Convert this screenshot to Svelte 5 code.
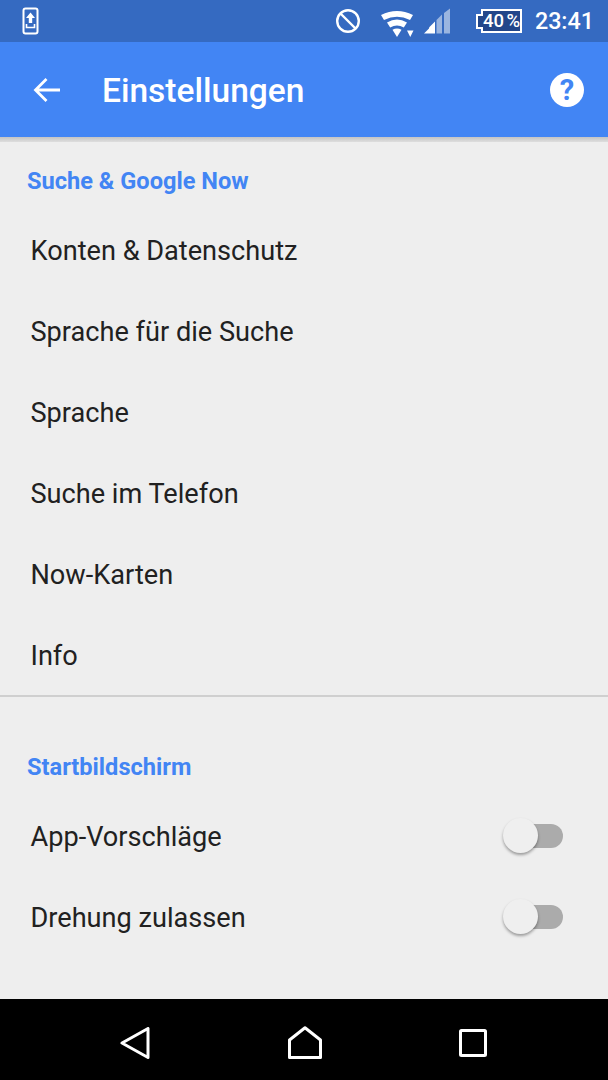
<script lang="ts">
  const searchItems = [
    "Konten & Datenschutz",
    "Sprache für die Suche",
    "Sprache",
    "Suche im Telefon",
    "Now-Karten",
    "Info",
  ];
  const homeItems = ["App-Vorschläge", "Drehung zulassen"];
</script>

<div class="phone">
  <div class="statusbar">
    <svg class="st-upload" width="18" height="28" viewBox="0 0 18 28">
      <rect x="1.5" y="1.5" width="14" height="25" rx="2" fill="none" stroke="#fff" stroke-width="2" />
      <path d="M8.5 5.5 L13 11 H10.2 V16 H6.8 V11 H4 Z" fill="#fff" />
      <path d="M4.5 17 V20.5 H12.5 V17" fill="none" stroke="#fff" stroke-width="1.6" />
    </svg>
    <div class="st-spacer"></div>
    <svg class="st-block" width="26" height="26" viewBox="0 0 26 26">
      <circle cx="13" cy="13" r="10.8" fill="none" stroke="#fff" stroke-width="2.4" />
      <path d="M5.5 5.5 L20.5 20.5" stroke="#fff" stroke-width="2.4" />
    </svg>
    <svg class="st-wifi" width="34" height="30" viewBox="0 0 34 30">
      <path d="M0 8 Q16 0 32 8 L29 13 Q16 6.500 3 13 Z" fill="#fff" />
      <path d="M6 15.500 Q16 9.500 26 15.500 L22.800 20.500 Q16 16.500 9.200 20.500 Z" fill="#fff" />
      <path d="M11.500 22.800 Q16 20 20.500 22.800 L16 30 Z" fill="#fff" />
      <path d="M26 23.500 H32.500 L29.250 30 Z" fill="#fff" />
    </svg>
    <svg class="st-signal" width="26" height="26" viewBox="0 0 26 26">
      <path d="M0 25.500 L5 20.500 V25.500 Z" fill="#fff" />
      <path d="M5 25.500 V19.500 L11 13.500 V25.500 Z" fill="#fff" />
      <path d="M12.500 25.500 V12 L18 6.500 V25.500 Z" fill="#fff" opacity="0.5" />
      <path d="M20 25.500 V5 L26 0.500 V25.500 Z" fill="#fff" opacity="0.5" />
    </svg>
    <div class="st-battery">
      <span class="bat-nub"></span>
      <span class="bat-body">40 %</span>
    </div>
    <span class="st-time">23:41</span>
  </div>

  <header class="appbar">
    <svg class="back" width="28" height="28" viewBox="0 0 28 28">
      <path d="M27 14 H3 M13.500 3 L2.500 14 L13.500 25" fill="none" stroke="#fff" stroke-width="2.800" />
    </svg>
    <h1>Einstellungen</h1>
    <div class="help">?</div>
  </header>
  <div class="appbar-shadow"></div>

  <main class="content">
    <section class="group first">
      <h2>Suche &amp; Google Now</h2>
      {#each searchItems as item}
        <div class="row">{item}</div>
      {/each}
    </section>
    <div class="divider"></div>
    <section class="group home">
      <h2>Startbildschirm</h2>
      {#each homeItems as item}
        <div class="row">
          <span>{item}</span>
          <span class="switch"><span class="thumb"></span></span>
        </div>
      {/each}
    </section>
  </main>

  <nav class="navbar">
    <svg width="30" height="32" viewBox="0 0 30 32">
      <path d="M2 16 L28 1.500 V30.500 Z" fill="none" stroke="#fff" stroke-width="3" stroke-linejoin="round" />
    </svg>
    <svg width="34" height="33" viewBox="0 0 34 33">
      <path d="M1.500 31.500 V14 L17 1.800 L32.500 14 V31.500 Z" fill="none" stroke="#fff" stroke-width="3" stroke-linejoin="round" />
    </svg>
    <svg width="28" height="28" viewBox="0 0 28 28">
      <rect x="1.500" y="1.500" width="25" height="25" rx="1" fill="none" stroke="#fff" stroke-width="3" />
    </svg>
  </nav>
</div>

<style>
  :global(body) {
    margin: 0;
    background: #eeeeee;
  }

  .phone {
    width: 608px;
    height: 1080px;
    display: flex;
    flex-direction: column;
    font-family: Roboto, "Liberation Sans", sans-serif;
    overflow: hidden;
  }

  .statusbar {
    height: 42px;
    background: #356ac1;
    display: flex;
    align-items: center;
    padding: 0 14px 0 22px;
    box-sizing: border-box;
    flex-shrink: 0;
  }

  .st-spacer {
    flex: 1;
  }

  .st-block {
    margin-right: 20px;
  }

  .st-wifi {
    margin-right: 9px;
    margin-top: 1px;
  }

  .st-signal {
    margin-right: 26px;
  }

  .st-battery {
    display: flex;
    align-items: center;
    margin-right: 13px;
  }

  .bat-nub {
    position: relative;
    z-index: 1;
    width: 7px;
    height: 15px;
    margin-right: -2px;
    border: 2px solid #fff;
    border-right: none;
    background: #22468a;
    box-sizing: border-box;
  }

  .bat-body {
    width: 41px;
    height: 24px;
    box-sizing: border-box;
    border: 2px solid #fff;
    background: #22468a;
    color: #fff;
    font-size: 18.5px;
    font-weight: 500;
    line-height: 20px;
    text-align: center;
    white-space: nowrap;
    word-spacing: -2px;
  }

  .st-time {
    color: #fff;
    font-size: 23.3px;
    font-weight: 500;
  }

  .appbar {
    height: 95px;
    background: #4285f4;
    display: flex;
    align-items: center;
    padding: 0 24px 0 33px;
    box-sizing: border-box;
    flex-shrink: 0;
  }

  .appbar h1 {
    flex: 1;
    margin: 2px 0 0 41px;
    color: #fff;
    font-size: 33.5px;
    font-weight: 500;
  }

  .help {
    width: 34px;
    height: 34px;
    border-radius: 50%;
    background: #fff;
    color: #4285f4;
    font-size: 29px;
    font-weight: 700;
    line-height: 34px;
    text-align: center;
  }

  .appbar-shadow {
    height: 5px;
    background: linear-gradient(#c4c4c4, #dedede);
    flex-shrink: 0;
  }

  .content {
    flex: 1;
    background: #eeeeee;
  }

  .group h2 {
    margin: 0 0 14px;
    padding: 0 27px;
    height: 30px;
    color: #4285f4;
    font-size: 23.6px;
    font-weight: 700;
    line-height: 30px;
  }

  .group.first {
    padding-top: 24px;
  }

  .group.home {
    padding-top: 55px;
  }

  .row {
    height: 81px;
    padding: 0 45px 0 30.5px;
    display: flex;
    align-items: center;
    justify-content: space-between;
    color: #212121;
    font-size: 27.15px;
  }

  .divider {
    height: 2px;
    margin-top: -1px;
    background: #cfcfcf;
  }

  .switch {
    position: relative;
    display: block;
    width: 52px;
    height: 24px;
    margin-top: -2px;
    border-radius: 12px;
    background: #ababab;
  }

  .thumb {
    position: absolute;
    left: -8px;
    top: -6px;
    width: 35px;
    height: 35px;
    border-radius: 50%;
    background: #efefef;
    box-shadow: 0 2px 3px rgba(0, 0, 0, 0.35);
  }

  .navbar {
    height: 81px;
    background: #000;
    display: flex;
    align-items: center;
    padding: 6px 121px 0 120px;
    box-sizing: border-box;
    justify-content: space-between;
    flex-shrink: 0;
  }
</style>
